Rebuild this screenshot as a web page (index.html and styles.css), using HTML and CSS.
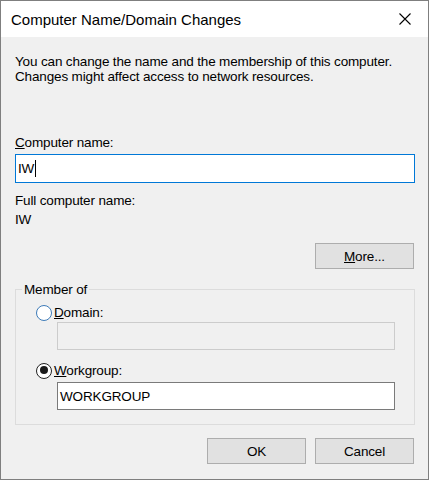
FILE: index.html
```html
<!DOCTYPE html>
<html lang="en">
<head>
<meta charset="utf-8">
<title>Computer Name/Domain Changes</title>
<link rel="stylesheet" href="styles.css">
</head>
<body>
<div class="window">
  <div class="titlebar">
    <span class="title">Computer Name/Domain Changes</span>
    <span class="close">
      <svg width="12" height="12" viewBox="0 0 12 12"><path d="M0.5 0.5 L11.5 11.5 M11.5 0.5 L0.5 11.5" stroke="#000" stroke-width="1.1" fill="none"/></svg>
    </span>
  </div>
  <div class="content">
    <p class="desc">You can change the name and the membership of this computer.<br>Changes might affect access to network resources.</p>
    <div class="label name-label"><u>C</u>omputer name:</div>
    <div class="textbox focused"><span>IW</span><span class="caret"></span></div>
    <div class="label full-label">Full computer name:</div>
    <div class="label">IW</div>
    <div class="more-row"><span class="btn"><u>M</u>ore...</span></div>
    <fieldset class="group">
      <legend>Member of</legend>
      <div class="radio-row"><span class="radio"></span><span><u>D</u>omain:</span></div>
      <div class="textbox sub disabled"></div>
      <div class="radio-row wg"><span class="radio checked"></span><span><u>W</u>orkgroup:</span></div>
      <div class="textbox sub normal">WORKGROUP</div>
    </fieldset>
    <div class="footer">
      <span class="btn">OK</span>
      <span class="btn">Cancel</span>
    </div>
  </div>
</div>
</body>
</html>
```

FILE: styles.css
```css
* { box-sizing: border-box; }
html, body { margin: 0; padding: 0; background: #f0f0f0; }
body {
  font-family: "Liberation Sans", Arial, sans-serif;
  font-size: 13.5px;
  letter-spacing: -0.15px;
  color: #000;
}
.window {
  width: 429px;
  height: 480px;
  border: 1px solid #7f7f7f;
  background: #f0f0f0;
  display: flex;
  flex-direction: column;
}
.titlebar {
  height: 36px;
  flex: none;
  background: #fff;
  display: flex;
  align-items: center;
  justify-content: space-between;
  padding-left: 10px;
}
.title { font-size: 15px; letter-spacing: 0; color: #000; }
.close {
  width: 46px;
  height: 36px;
  display: flex;
  align-items: center;
  justify-content: center;
}
.content { padding: 0 13px 0 14px; }
.desc {
  margin: 17px 0 0;
  line-height: 15px;
  white-space: nowrap;
}
.label { line-height: 15px; }
.name-label { margin-top: 51px; }
.textbox {
  height: 29px;
  background: #fff;
  border: 1px solid #7a7a7a;
  display: flex;
  align-items: center;
  padding-left: 2px;
}
.textbox.focused { border-color: #0078d7; margin-top: 4px; }
.caret { width: 1px; height: 17px; background: #000; margin-left: 1px; }
.full-label { margin-top: 10px; margin-bottom: 4px; }
.more-row {
  display: flex;
  justify-content: flex-end;
  padding-right: 1px;
  margin-top: 16px;
}
.btn {
  width: 99px;
  height: 26px;
  background: #e1e1e1;
  border: 1px solid #adadad;
  display: flex;
  align-items: center;
  justify-content: center;
}
.group {
  margin: 13px 0 0;
  border: 1px solid #dcdcdc;
  padding: 0 19px 13px 20px;
  height: 143px;
}
.group legend { padding: 0 2px; margin-left: -14px; line-height: 15px; }
.radio-row {
  display: flex;
  align-items: center;
  height: 17px;
  margin-top: 7px;
}
.radio {
  width: 16px;
  height: 16px;
  border-radius: 50%;
  border: 1px solid #3d7bb8;
  background: #fff;
  margin-right: 2px;
  flex: none;
  position: relative;
}
.radio.checked { border: 1.5px solid #222; }
.radio.checked::after {
  content: "";
  position: absolute;
  left: 2.5px; top: 2.5px;
  width: 8px; height: 8px;
  border-radius: 50%;
  background: #1a1a1a;
}
.textbox.sub {
  margin-left: 21px;
  height: 28px;
}
.textbox.disabled { background: #f0f0f0; border-color: #cccccc; margin-top: 1px; }
.radio-row.wg { margin-top: 12px; }
.textbox.normal { margin-top: 3px; }
.footer {
  display: flex;
  justify-content: flex-end;
  gap: 9px;
  padding-right: 1px;
  margin-top: 13px;
}
```
